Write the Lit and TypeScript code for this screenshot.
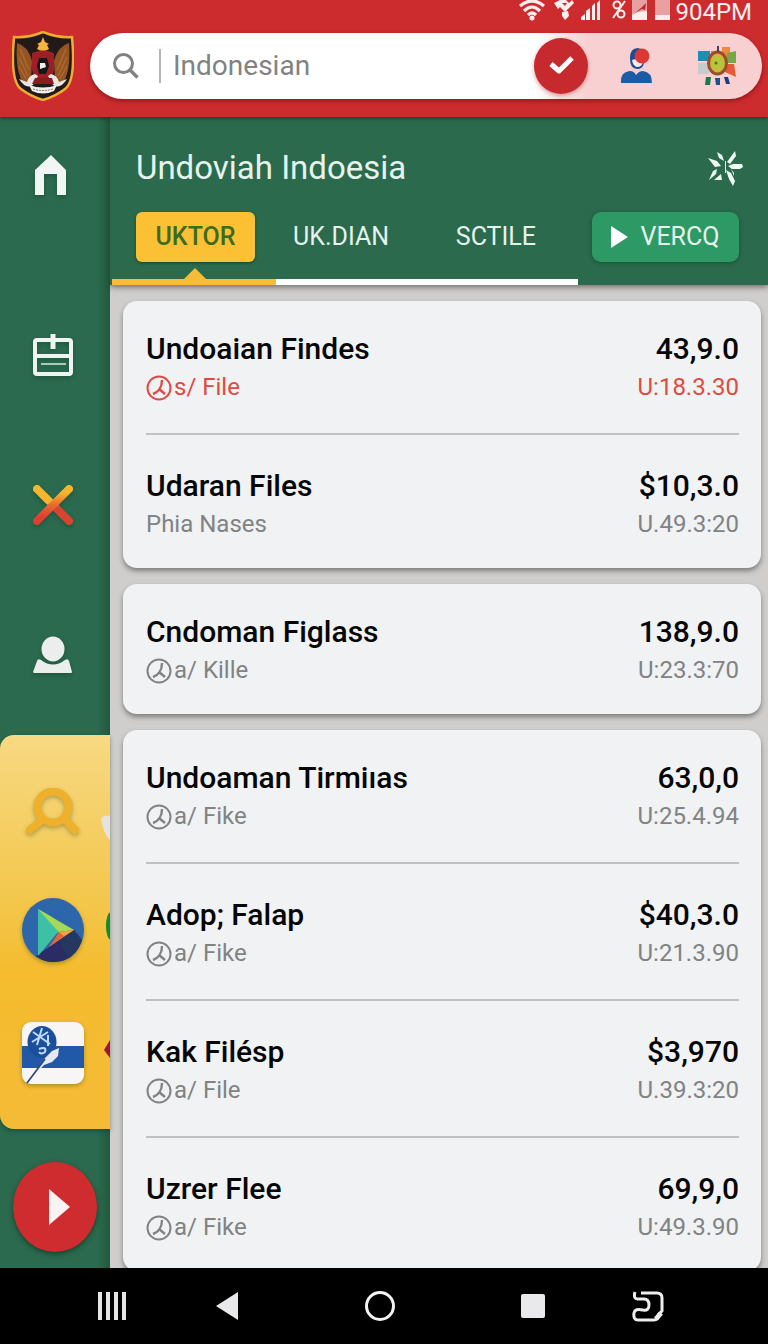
import {LitElement, html, svg, css} from 'lit';
import {customElement, property} from 'lit/decorators.js';
import {classMap} from 'lit/directives/class-map.js';

interface Entry {
  title: string;
  sub: string;
  badge?: boolean;
  amount: string;
  code: string;
  alert?: boolean;
}

const GROUPS: Entry[][] = [
  [
    {title: 'Undoaian Findes', sub: 's/ File', badge: true, amount: '43,9.0', code: 'U:18.3.30', alert: true},
    {title: 'Udaran Files', sub: 'Phia Nases', amount: '$10,3.0', code: 'U.49.3:20'},
  ],
  [{title: 'Cndoman Figlass', sub: 'a/ Kille', badge: true, amount: '138,9.0', code: 'U:23.3:70'}],
  [
    {title: 'Undoaman Tirmiıas', sub: 'a/ Fike', badge: true, amount: '63,0,0', code: 'U:25.4.94'},
    {title: 'Adop; Falap', sub: 'a/ Fike', badge: true, amount: '$40,3.0', code: 'U:21.3.90'},
    {title: 'Kak Filésp', sub: 'a/ File', badge: true, amount: '$3,970', code: 'U.39.3:20'},
    {title: 'Uzrer Flee', sub: 'a/ Fike', badge: true, amount: '69,9,0', code: 'U:49.3.90'},
  ],
];

@customElement('entry-row')
export class EntryRow extends LitElement {
  static override styles = css`
    :host {
      display: block;
    }

    .row {
      display: flex;
      justify-content: space-between;
    }

    .side {
      display: flex;
      flex-direction: column;
    }

    .right {
      align-items: flex-end;
    }

    .title {
      margin: 0;
      font-size: 30px;
      line-height: 40px;
      font-weight: 500;
      color: #060606;
    }

    .sub {
      display: flex;
      align-items: center;
      font-size: 24px;
      line-height: 36px;
      color: #808284;
    }

    .alert {
      color: #df4a41;
    }

    .badge {
      width: 27px;
      height: 28px;
      margin-right: 1px;
    }
  `;

  @property({attribute: false})
  entry!: Entry;

  override render() {
    const {title, sub, badge, amount, code, alert} = this.entry;
    const subClass = classMap({sub: true, alert: !!alert});
    return html`
      <div class="row">
        <div class="side">
          <h2 class="title">${title}</h2>
          <div class=${subClass}>
            ${badge
              ? html`<svg class="badge" viewBox="0 0 27 28" fill="none" stroke="currentColor" stroke-width="2">
                  <circle cx="13" cy="15" r="11.5" />
                  <path d="M16 7c0 6-3 12-9 14M13 16l6 5" stroke-width="2.4" />
                </svg>`
              : ''}
            <span>${sub}</span>
          </div>
        </div>
        <div class="side right">
          <div class="title">${amount}</div>
          <div class=${subClass}>${code}</div>
        </div>
      </div>
    `;
  }
}

@customElement('status-bar')
export class StatusBar extends LitElement {
  static override styles = css`
    :host {
      display: block;
    }

    .bar {
      display: flex;
      justify-content: flex-end;
      align-items: flex-start;
      height: 24px;
      padding-right: 16px;
      color: #fbeeee;
      font-size: 24px;
      line-height: 24px;
    }

    .icons {
      width: 156px;
      height: 22px;
    }
  `;

  override render() {
    return html`
      <div class="bar">
        <svg class="icons" viewBox="0 0 156 22" fill="currentColor">
          <g fill="none" stroke="currentColor" stroke-width="3.2">
            <path d="M1 6Q13-4 25 6M5 11Q13 3 21 11M9 15Q13 11 17 15" />
          </g>
          <circle cx="13" cy="18" r="2.5" />
          <path d="M35 3l6-3h6l3 3 3-3 2 3-6 6-3 3-5-5-2 2zM43 3l3 3 2-3zM43 12l6-1 1 5-4 4-3-4z" fill-rule="evenodd" />
          <path d="M62 20v-3l4-3v6zM67 20v-9l4-3v12zM73 20V6l3-3v17zM78 20V3l3-3v20z" />
          <g fill="none" stroke="currentColor" stroke-width="2">
            <path d="M106 1L94 18" />
            <circle cx="98" cy="5" r="3.5" />
            <circle cx="102" cy="14" r="3.5" />
          </g>
          <path d="M113 0h15v20h-15z" opacity=".6" />
          <path d="M113 20v-5l6-3 9-1v9zM136 15h15v5h-15z" />
          <path d="M116 13l6-5 5-5-1 7-3-1z" fill="#b9262b" />
          <path d="M136 0h15v15h-15z" opacity=".6" />
        </svg>
        <span>904PM</span>
      </div>
    `;
  }
}

const emblem = svg`
  <path d="M31 1Q46 7 60 6Q64 50 53 58Q44 65 31 69Q18 65 9 58Q-2 50 2 6Q16 7 31 1z"
    fill="#211a18" stroke="#f0ad2f" stroke-width="2.5" />
  <path d="M5 12q11 3 15 18l-1 20-8 2Q3 40 5 12zM57 12q-11 3-15 18l1 20 8 2q8-12 6-40z" fill="#965423" />
  <path d="M8 18l9 21M7 26l9 19M7 35l7 13M54 18l-9 21M55 26l-9 19M55 35l-7 13"
    stroke="#ab682f" stroke-width="1.5" />
  <path d="M31 6l2 5 4 2-2 1 2 4q-6 4-12 0l2-4-2-1 4-2z" fill="#f4b43c" />
  <path d="M20 22q11-5 22 0v17q-3 12-11 14-8-2-11-14z" fill="#9c1f25" />
  <path d="M27 27h8l2 8-3 8h-7l-2-8z" fill="#17171a" />
  <path d="M28 32h5l1 4-6 2z" fill="#f4eeee" />
  <path d="M23 43q-6 1-8 8l-8-3q7 11 14 6l5-9zM39 43q6 1 8 8l8-3q-7 11-14 6l-5-9z" fill="#e8e5e3" />
  <path d="M23 47h17l2 6H20z" fill="#8a1c20" />
  <path d="M17 54q14 5 28 0l-3 6q-11 5-22 0z" fill="#f2eeea" />
  <path d="M21 58q10 3 20 0" fill="none" stroke="#777" stroke-dasharray="2 1" />
`;

@customElement('top-bar')
export class TopBar extends LitElement {
  static override styles = css`
    :host {
      display: block;
    }

    .bar {
      display: flex;
      align-items: center;
      gap: 16px;
      padding: 7px 6px 16px 12px;
    }

    .emblem {
      flex: none;
      width: 62px;
      height: 70px;
    }

    .search {
      flex: 1;
      display: flex;
      align-items: center;
      min-width: 0;
      height: 66px;
      border-radius: 33px;
      background: linear-gradient(90deg, #fff 66%, #f9d0d1 74%);
      box-shadow: 0 2px 5px rgba(90, 0, 0, 0.5);
    }

    .glass {
      flex: none;
      width: 26px;
      height: 26px;
      margin: 0 20px 0 23px;
    }

    .query {
      flex: 1;
      min-width: 0;
      height: 34px;
      padding: 0 0 0 12px;
      border: 0;
      border-left: 2px solid #b5b5b5;
      outline: 0;
      background: none;
      color: #828282;
      font: 28px/34px Roboto, sans-serif;
    }

    .query::placeholder {
      color: #828282;
      opacity: 1;
    }

    .check,
    .plain {
      flex: none;
      display: flex;
      align-items: center;
      justify-content: center;
      padding: 0;
      border: 0;
      background: none;
    }

    .check {
      width: 54px;
      height: 56px;
      border-radius: 50%;
      background: #c62a2f;
      box-shadow: 0 2px 4px rgba(150, 0, 0, 0.35);
    }

    .plain {
      width: 48px;
      height: 48px;
    }

    .user {
      margin-left: 24px;
    }

    .camera {
      margin: 0 21px 0 33px;
    }
  `;

  override render() {
    return html`
      <div class="bar">
        <svg class="emblem" viewBox="0 0 62 70">${emblem}</svg>
        <div class="search">
          <svg class="glass" viewBox="0 0 26 26" fill="none" stroke="#828282" stroke-width="3">
            <circle cx="10.5" cy="10.5" r="9" />
            <path d="M17 17l7.5 7.5" stroke-width="3.5" />
          </svg>
          <input class="query" type="text" aria-label="Search" placeholder="Indonesian" />
          <button class="check" aria-label="Confirm">
            <svg width="28" height="24" viewBox="0 0 28 24" fill="none" stroke="#fff" stroke-width="5" stroke-linejoin="round">
              <path d="M4 10l8 7L25 4" />
            </svg>
          </button>
          <button class="plain user" aria-label="Account">
            <svg width="32" height="36" viewBox="0 0 32 36">
              <path d="M1 35q-1-11 9-12 4 0 6 4 3-4 7-4 9 1 9 12z" fill="#1d5ba6" />
              <path d="M18 0q-8 0-8 10 0 11 7 11 6 0 7-6V2z" fill="#1d4d94" />
              <path d="M12 12q3-1 5-1l6 3q-1 5-6 5-4-1-5-7z" fill="#fbecec" />
              <circle cx="22" cy="8" r="7.5" fill="#dc3836" />
            </svg>
          </button>
          <button class="plain camera" aria-label="Scan">
            <svg width="40" height="40" viewBox="0 0 40 40">
              <path d="M1 5h12v10H1z" fill="#1990b4" />
              <path d="M1 17h11v11H1z" fill="#c5cccb" />
              <path d="M14 5h10v12H14z" fill="#96aa70" />
              <path d="M25 1h8v10h-8z" fill="#ee8a3a" />
              <path d="M30 7l9-2v12h-9z" fill="#74a848" />
              <path d="M28 18h9l2 13-11-5z" fill="#e85a36" />
              <ellipse cx="20.5" cy="17" rx="9" ry="11" fill="#d3b43c" stroke="#96502c" stroke-width="3" />
              <ellipse cx="20.5" cy="17" rx="5.5" ry="6.5" fill="#b3c63c" />
              <circle cx="19" cy="17" r="1.5" fill="#5b6d20" />
              <path d="M20 0h2v6h-2z" fill="#3b4659" />
              <path d="M9 31h5l-1 8H8z" fill="#167a4a" />
              <path d="M18 32h5v7h-4z" fill="#1f4f93" />
              <path d="M27 31h4l2 7h-4z" fill="#203e7c" />
            </svg>
          </button>
        </div>
      </div>
    `;
  }
}

@customElement('side-nav')
export class SideNav extends LitElement {
  static override styles = css`
    :host {
      display: flex;
      background: linear-gradient(90deg, #2b6a4e 88%, #215a3e);
    }

    .nav {
      flex: 1;
      display: flex;
      flex-direction: column;
      min-width: 0;
    }

    .links {
      display: flex;
      flex-direction: column;
      align-items: center;
      gap: 102px;
      padding: 34px 4px 56px 0;
    }

    .item {
      flex: none;
      display: flex;
      align-items: center;
      justify-content: center;
      width: 48px;
      height: 48px;
      padding: 0;
      border: 0;
      background: none;
      filter: drop-shadow(0 2px 2px rgba(0, 40, 20, 0.3));
    }

    .home {
      margin-bottom: 30px;
    }

    .apps {
      position: relative;
      display: flex;
      flex-direction: column;
      align-items: center;
      gap: 59px;
      padding: 50px 4px 44px 0;
      border-radius: 14px 0 0 14px;
      background: linear-gradient(#f8d983, #f3c84f 40%, #f4bc2e 60%, #f6bb36);
      box-shadow: 0 2px 4px rgba(0, 40, 20, 0.4);
      overflow: hidden;
    }

    .wide {
      width: 64px;
      height: 64px;
    }

    .top {
      height: 54px;
    }

    /* icons of the next drawer page that peek in from the edge */
    .peek {
      position: absolute;
      top: 80px;
      right: 0;
      width: 10px;
      height: 250px;
    }

    .play {
      align-self: center;
      width: 84px;
      height: 90px;
      margin: 33px 0 16px;
      border-radius: 50%;
      background: #cf2c30;
      box-shadow: 0 2px 5px rgba(0, 40, 20, 0.6);
      filter: none;
    }
  `;

  override render() {
    return html`
      <nav class="nav">
        <div class="links">
          <button class="item home" aria-label="Home">
            <svg width="36" height="42" viewBox="0 0 36 42">
              <path d="M0 41V16L16 1l15 15v25h-9V20H9v21z" fill="#f1f5f3" />
            </svg>
          </button>
          <button class="item" aria-label="Records">
            <svg width="42" height="44" viewBox="0 0 42 44" fill="none" stroke="#eef5f1" stroke-width="4">
              <rect x="3" y="7" width="36" height="34" rx="2" />
              <path d="M3 23h36" />
              <path d="M21 1v15" stroke-width="5" />
              <path d="M9 31h25" stroke="#a9c8b8" stroke-width="2" />
            </svg>
          </button>
          <button class="item" aria-label="Close">
            <svg width="42" height="42" viewBox="0 0 42 42" fill="none" stroke-width="8" stroke-linecap="round">
              <defs>
                <linearGradient id="warm" gradientUnits="userSpaceOnUse" x1="0" y1="4" x2="0" y2="38">
                  <stop offset=".15" stop-color="#f5b52f" />
                  <stop offset=".5" stop-color="#e86a30" />
                  <stop offset=".85" stop-color="#dd4030" />
                </linearGradient>
                <linearGradient id="split" gradientUnits="userSpaceOnUse" x1="0" y1="4" x2="0" y2="38">
                  <stop offset=".45" stop-color="#f5b52f" />
                  <stop offset=".55" stop-color="#d84430" />
                </linearGradient>
              </defs>
              <path d="M5 5l32 32" stroke="url(#split)" />
              <path d="M37 5L5 37" stroke="url(#warm)" />
            </svg>
          </button>
          <button class="item" aria-label="Profile">
            <svg width="40" height="38" viewBox="0 0 40 38" fill="#ebeeed">
              <ellipse cx="20" cy="13" rx="11.5" ry="12.5" />
              <path d="M0 36l4-11q1-3 4-1 12 9 24 0 3-2 4 1l3 11q0 1-1 1H1z" />
            </svg>
          </button>
        </div>
        <div class="apps">
          <button class="item wide top" aria-label="Lookup">
            <svg width="58" height="48" viewBox="0 0 58 48" fill="none" stroke="#efb02b">
              <circle cx="29" cy="19" r="15.5" stroke-width="8" />
              <path d="M18 32L6 42M41 31l10 11" stroke-width="8" stroke-linecap="round" />
            </svg>
          </button>
          <button class="item wide" aria-label="Play">
            <svg width="62" height="64" viewBox="0 0 62 64">
              <ellipse cx="31" cy="32" rx="31" ry="32" fill="#2e66ac" />
              <path d="M52 32l8 10q-7 22-29 22-10 0-17-6z" fill="#2b2b66" />
              <path d="M52 32l8 10q-5 13-14 18L37 43z" fill="#243862" />
              <path d="M16 11v47l21-25z" fill="#3fbfa4" />
              <path d="M16 11l14 8 9 14-2 2z" fill="#58d183" />
              <path d="M16 11l36 21-15 2z" fill="#a6d957" />
              <path d="M52 32L27 49l10-15z" fill="#e2683a" />
              <path d="M37 34l15-2-10 6z" fill="#eea543" />
            </svg>
          </button>
          <button class="item wide" aria-label="Notes">
            <svg width="62" height="62" viewBox="0 0 62 62">
              <rect width="62" height="62" rx="9" fill="#f7f6f5" />
              <path d="M0 24h62v22H0z" fill="#2258a8" />
              <ellipse cx="20" cy="20" rx="14.5" ry="16" fill="#1c4f9b" />
              <path
                d="M11 10l17 12M20 6l-5 17M10 20l16-10M26 13v11M17 27q8-3 6 3-4 3-6 0"
                fill="none"
                stroke="#bfdcf2"
                stroke-width="2"
              />
              <path d="M5 61l18-25 7-7 7-3-1 8-6 6-8 3z" fill="#e7e9f1" />
              <path d="M5 61l18-24" stroke="#27407c" stroke-width="1.5" />
            </svg>
          </button>
          <svg class="peek" viewBox="0 0 10 250">
            <path d="M1 4q3-5 9-3v24Q4 20 1 4z" fill="#e6e3df" />
            <ellipse cx="11" cy="111" rx="5" ry="14" fill="#178a28" />
            <path d="M4 235l6-10v18z" fill="#9c1730" />
          </svg>
        </div>
        <button class="item play" aria-label="Start">
          <svg width="84" height="90" viewBox="0 0 84 90"><path d="M36 27l21 18-21 18z" fill="#f9f3f3" /></svg>
        </button>
      </nav>
    `;
  }
}

@customElement('page-head')
export class PageHead extends LitElement {
  static override styles = css`
    :host {
      display: block;
      position: relative;
      z-index: 1;
      background: #2b6a4d;
      box-shadow: 0 2px 6px rgba(40, 40, 40, 0.6);
    }

    .heading {
      display: flex;
      align-items: center;
      justify-content: space-between;
      padding: 29px 24px 22px 26px;
    }

    .name {
      margin: 0;
      font-size: 33px;
      line-height: 44px;
      font-weight: 400;
      color: #e6f3ec;
    }

    .spark {
      width: 38px;
      height: 38px;
      padding: 0;
      border: 0;
      background: none;
    }

    .tabs {
      display: flex;
      align-items: center;
      padding: 0 29px 17px 26px;
    }

    .tab {
      height: 50px;
      margin: 0;
      padding: 0;
      border: 0;
      background: none;
      color: #e6f3ec;
      font: 25px/50px Roboto, sans-serif;
    }

    .active {
      flex: none;
      width: 119px;
      border-radius: 6px;
      background: #fbc034;
      box-shadow: 0 1px 3px rgba(0, 40, 20, 0.6);
      color: #3d6b1d;
      font-weight: 500;
    }

    .middle {
      flex: 1;
      display: flex;
      justify-content: space-between;
      padding: 0 56px 0 38px;
    }

    .cta {
      flex: none;
      display: flex;
      align-items: center;
      justify-content: center;
      gap: 12px;
      width: 147px;
      border-radius: 9px;
      background: #2d9964;
      box-shadow: 0 1px 4px rgba(0, 40, 20, 0.4);
    }

    .rule {
      display: grid;
      grid-template-columns: 25fr 46fr 29fr;
      height: 6px;
      padding-left: 2px;
    }

    .mark {
      position: relative;
      background: #f8bd37;
    }

    .mark::before {
      content: '';
      position: absolute;
      left: 50%;
      bottom: 100%;
      margin-left: -10px;
      border: 11px solid transparent;
      border-top: 0;
      border-bottom-color: #f8bd37;
    }

    .line {
      background: #fff;
    }
  `;

  override render() {
    return html`
      <div class="heading">
        <h1 class="name">Undoviah Indoesia</h1>
        <button class="spark" aria-label="Highlights">
          <svg width="38" height="38" viewBox="0 0 38 38" fill="#f2faf5">
            <path d="M2 9l9 3 4 5-6 1zM11 3l5 3 2 6-5-3zM29 2l1 5-6 8-3-2z" />
            <path d="M19 12h1v12h-1zM22 17l5-2h9l1 3-3 2h-8z" />
            <path d="M3 31l4-9 4-2-1 5zM8 31l7-6 1 6zM20 21l5 3 4 8-2 5-4-7zM25 20l3 4v3z" />
          </svg>
        </button>
      </div>
      <div class="tabs">
        <button class="tab active">UKTOR</button>
        <div class="middle">
          <button class="tab">UK.DIAN</button>
          <button class="tab">SCTILE</button>
        </div>
        <button class="tab cta">
          <svg width="17" height="22" viewBox="0 0 17 22"><path d="M0 0l17 11L0 22z" fill="#fff" /></svg>
          VERCQ
        </button>
      </div>
      <div class="rule"><span class="mark"></span><span class="line"></span></div>
    `;
  }
}

@customElement('system-nav')
export class SystemNav extends LitElement {
  static override styles = css`
    :host {
      display: block;
      background: #000;
    }

    .bar {
      display: grid;
      grid-template-columns: 6fr 6fr 10fr 6fr 6fr;
      justify-items: center;
      padding: 18px 62px 18px 54px;
    }

    .key {
      display: flex;
      align-items: center;
      justify-content: center;
      width: 40px;
      height: 40px;
      padding: 0;
      border: 0;
      background: none;
    }
  `;

  override render() {
    return html`
      <div class="bar">
        <button class="key" aria-label="Menu">
          <svg width="30" height="30" viewBox="0 0 30 30" fill="#e5e5e5">
            <path d="M1 1h4v28H1zM9 1h4v28H9zM17 1h4v28h-4zM25 1h4v28h-4z" />
          </svg>
        </button>
        <button class="key" aria-label="Back">
          <svg width="24" height="28" viewBox="0 0 24 28"><path d="M23 0v28L1 14z" fill="#e9e8ea" /></svg>
        </button>
        <button class="key" aria-label="Home">
          <svg width="32" height="32" viewBox="0 0 32 32" fill="none" stroke="#f2f2f2" stroke-width="3">
            <circle cx="16" cy="16" r="13.5" />
          </svg>
        </button>
        <button class="key" aria-label="Recent">
          <svg width="24" height="26" viewBox="0 0 24 26"><rect width="24" height="24" y="1" rx="2" fill="#e9e8ea" /></svg>
        </button>
        <button class="key" aria-label="Rotate">
          <svg width="32" height="32" viewBox="0 0 32 32" fill="none" stroke="#eee" stroke-width="3">
            <path d="M3 2q-2 7 3 7h6q5 0 5 6 0 6-6 5-8-2-9 3-1 7 4 7h16q4 0 5-6l3-3V8q0-5-5-5H9" />
            <path d="M24 29l5-6" stroke-width="5" />
          </svg>
        </button>
      </div>
    `;
  }
}

@customElement('app-root')
export class AppRoot extends LitElement {
  static override styles = css`
    :host {
      display: block;
      font-family: Roboto, sans-serif;
    }

    .screen {
      display: flex;
      flex-direction: column;
      height: 100vh;
    }

    .top {
      position: relative;
      z-index: 2;
      background: #cd2c2f;
      box-shadow: 0 1px 4px rgba(30, 20, 10, 0.7);
    }

    .body {
      flex: 1;
      display: grid;
      grid-template: minmax(0, 1fr) / 110px minmax(0, 1fr);
      min-height: 0;
    }

    .main {
      display: flex;
      flex-direction: column;
      min-height: 0;
      background: #cfcecc;
    }

    .list {
      flex: 1;
      display: flex;
      flex-direction: column;
      gap: 16px;
      min-height: 0;
      padding: 16px 7px 0 13px;
      overflow-y: auto;
      scrollbar-width: none;
    }

    .card {
      flex: none;
      padding: 28px 22px 26px 23px;
      border-radius: 14px;
      background: #f0f2f3;
      box-shadow: 0 3px 5px rgba(60, 60, 60, 0.55);
    }

    .split {
      margin-top: 28px;
      padding-top: 31px;
      border-top: 2px solid #bfc1c2;
    }
  `;

  override render() {
    return html`
      <div class="screen">
        <header class="top">
          <status-bar></status-bar>
          <top-bar></top-bar>
        </header>
        <div class="body">
          <side-nav></side-nav>
          <main class="main">
            <page-head></page-head>
            <div class="list">
              ${GROUPS.map(
                (group) => html`
                  <section class="card">
                    ${group.map(
                      (entry, i) => html`<entry-row class=${classMap({split: i > 0})} .entry=${entry}></entry-row>`
                    )}
                  </section>
                `
              )}
            </div>
          </main>
        </div>
        <system-nav></system-nav>
      </div>
    `;
  }
}

declare global {
  interface HTMLElementTagNameMap {
    'app-root': AppRoot;
    'entry-row': EntryRow;
    'page-head': PageHead;
    'side-nav': SideNav;
    'status-bar': StatusBar;
    'system-nav': SystemNav;
    'top-bar': TopBar;
  }
}
